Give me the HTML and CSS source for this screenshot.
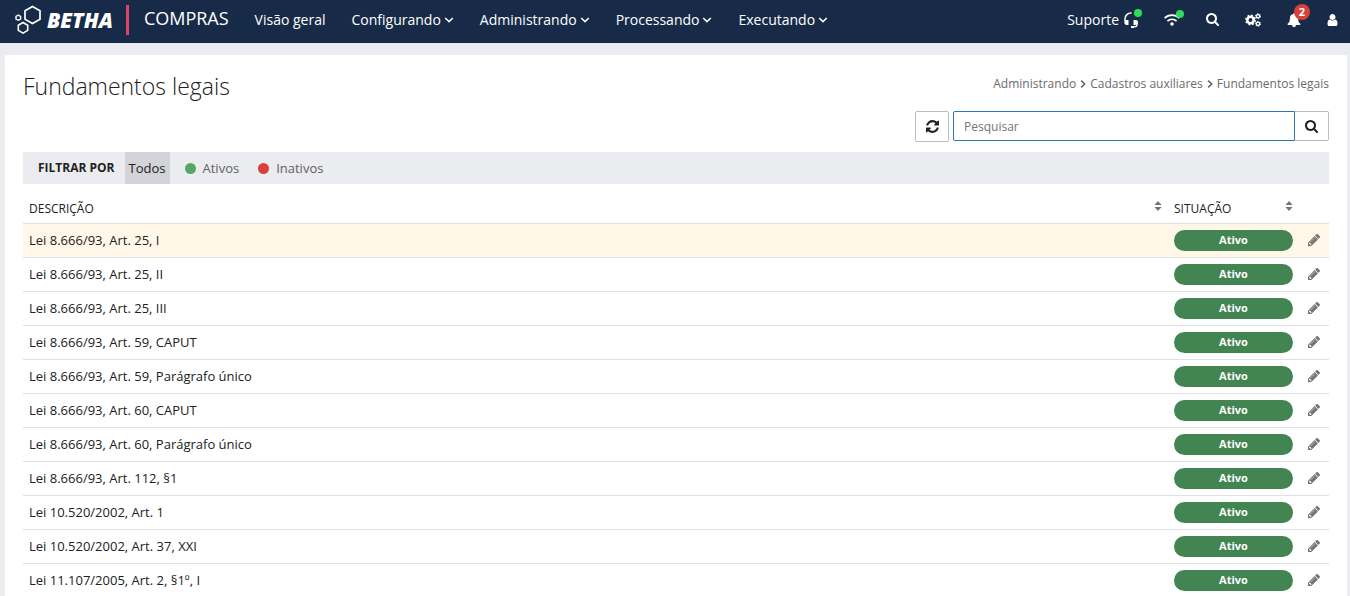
FILE: index.html
```
<!DOCTYPE html>
<html lang="pt-BR">
<head>
<meta charset="utf-8">
<meta name="viewport" content="width=device-width, initial-scale=1">
<title>Fundamentos legais</title>
<link rel="stylesheet" href="styles.css">
</head>
<body>
<svg class="sprite" aria-hidden="true">
  <symbol id="search" viewBox="0 0 1664 1664"><path d="M1152 704q0-185-131.500-316.500T704 256 387.500 387.500 256 704t131.500 316.500T704 1152t316.500-131.500T1152 704zm512 832q0 52-38 90t-90 38q-54 0-90-38l-343-342q-179 124-399 124-143 0-273.500-55.500t-225-150-150-225T0 704t55.500-273.500 150-225 225-150T704 0t273.500 55.500 225 150 150 225T1408 704q0 220-124 399l343 343q37 37 37 90z"/></symbol>
  <symbol id="refresh" viewBox="0 0 1536 1536"><path d="M1511 928q0 5-1 7-64 268-268 434.500T764 1536q-146 0-282.500-55T238 1324l-129 129q-19 19-45 19t-45-19-19-45V960q0-26 19-45t45-19h448q26 0 45 19t19 45-19 45l-137 137q71 66 161 102t187 36q134 0 250-65t186-179q11-17 53-117 8-23 30-23h192q13 0 22.500 9.500t9.500 22.500zm25-800v448q0 26-19 45t-45 19h-448q-26 0-45-19t-19-45 19-45l138-138Q969 256 768 256q-134 0-250 65T332 500q-11 17-53 117-8 23-30 23H50q-13 0-22.500-9.500T18 608v-7q65-268 270-434.500T768 0q146 0 284 55.500T1297 212l130-129q19-19 45-19t45 19 19 45z"/></symbol>
  <symbol id="pencil" viewBox="0 149 1515 1515"><path d="M363 1536l91-91-235-235-91 91v107h128v128h107zm523-928q0-22-22-22-10 0-17 7l-542 542q-7 7-7 17 0 22 22 22 10 0 17-7l542-542q7-7 7-17zm-54-192l416 416-832 832H0v-416zm683 96q0 53-37 90l-166 166-416-416 166-165q36-38 90-38 53 0 91 38l235 234q37 39 37 91z"/></symbol>
  <symbol id="bell" viewBox="0 0 1664 1792"><path d="M1664 1408q0 52-38 90t-90 38h-448q0 106-75 181t-181 75-181-75-75-181H128q-52 0-90-38t-38-90q50-42 91-88t85-119.500 74.500-158.500 50-206T320 576q0-152 117-282.500T744 135q-8-19-8-39 0-40 28-68t68-28 68 28 28 68q0 20-8 39 190 28 307 158.500T1344 576q0 139 19.500 260t50 206 74.500 158.500 85 119.500 91 88z"/></symbol>
  <symbol id="user" viewBox="0 0 1280 1536"><path d="M1280 1271q0 109-62.500 187t-150.500 78H213q-88 0-150.500-78T0 1271q0-85 8.500-160.500t31.500-152 58.500-131 94-89T327 704q131 128 313 128t313-128q76 0 134.500 34.500t94 89 58.500 131 31.500 152 8.500 160.500zm-256-887q0 159-112.500 271.500T640 768 368.500 655.500 256 384t112.500-271.500T640 0t271.500 112.500T1024 384z"/></symbol>
  <symbol id="cogs" viewBox="0 0 16 14">
    <g fill="none" stroke="currentColor">
      <circle cx="5.500" cy="7" r="3.200" stroke-width="2.600"/>
      <circle cx="5.500" cy="7" r="4.700" stroke-width="1.500" stroke-dasharray="1.850 1.841"/>
      <circle cx="13" cy="3.200" r="1.700" stroke-width="1.400"/>
      <circle cx="13" cy="3.200" r="2.500" stroke-width="1" stroke-dasharray="1.300 1.318"/>
      <circle cx="13" cy="10.800" r="1.700" stroke-width="1.400"/>
      <circle cx="13" cy="10.800" r="2.500" stroke-width="1" stroke-dasharray="1.300 1.318"/>
    </g>
  </symbol>
  <symbol id="wifi" viewBox="0 0 16 13">
    <path fill="none" stroke="currentColor" stroke-width="1.700" d="M.6 5.200a10.600 10.600 0 0 1 14.800 0M3.400 8.100a6.700 6.700 0 0 1 9.200 0"/>
    <circle cx="8" cy="11" r="1.800"/>
  </symbol>
  <symbol id="headset" viewBox="0 0 14 16">
    <path fill="none" stroke="currentColor" stroke-width="1.500" d="M1 9V7.200A6 6 0 0 1 7.500 1M13 9v3.500q0 2.300-2.500 2.300H8"/>
    <path d="M2 8h2.500v5H3Q.3 12.700.3 10.300T2 8zM12 8H9.500v5H11q2.700-.3 2.700-2.700T12 8zM7 14h3v2H7z"/>
  </symbol>
  <symbol id="down" viewBox="0 0 10 6"><path d="M1.200 1L5 4.600 8.800 1" fill="none" stroke="currentColor" stroke-width="1.500"/></symbol>
  <symbol id="right" viewBox="0 0 6 8"><path d="M1.200.7L4.600 4 1.200 7.300" fill="none" stroke="currentColor" stroke-width="1.700"/></symbol>
  <symbol id="sort" viewBox="0 0 8 10"><path d="M4 0l3.600 4H.4zM4 10L.4 6h7.200z"/></symbol>
</svg>

<header class="topbar">
  <a class="brand" href="#">
    <svg class="brand-mark" viewBox="0 0 28 30" aria-hidden="true">
      <path stroke-width="1.700" d="M18.500 1.500l7.500 4.200v8.600l-7.500 4.200-7.500-4.200V5.700z"/>
      <path stroke-width="1.600" d="M9 17.500l4.700 2.700v5.200L9 28.100l-4.700-2.700v-5.200z"/>
      <path stroke-width="1.400" d="M4.300 10.100l2.300 1.300V14l-2.300 1.300L2 14v-2.600z"/>
    </svg>
    <span class="brand-name">BETHA</span>
  </a>
  <span class="system">COMPRAS</span>
  <nav class="menu" aria-label="Principal">
    <a href="#">Visão geral</a>
    <a href="#">Configurando<svg class="caret"><use href="#down"/></svg></a>
    <a href="#">Administrando<svg class="caret"><use href="#down"/></svg></a>
    <a href="#">Processando<svg class="caret"><use href="#down"/></svg></a>
    <a href="#">Executando<svg class="caret"><use href="#down"/></svg></a>
  </nav>
  <div class="tools">
    <a class="tool support" href="#">Suporte<span class="mark"><svg class="i-headset"><use href="#headset"/></svg><i class="online"></i></span></a>
    <button class="tool" aria-label="Conexão"><span class="mark"><svg class="i-wifi"><use href="#wifi"/></svg><i class="online"></i></span></button>
    <button class="tool" aria-label="Buscar"><svg class="i-search"><use href="#search"/></svg></button>
    <button class="tool" aria-label="Configurações"><svg class="i-cogs"><use href="#cogs"/></svg></button>
    <button class="tool" aria-label="Notificações"><span class="mark"><svg class="i-bell"><use href="#bell"/></svg><span class="count">2</span></span></button>
    <button class="tool" aria-label="Usuário"><svg class="i-user"><use href="#user"/></svg></button>
  </div>
</header>

<main class="panel">
  <div class="heading">
    <h1>Fundamentos legais</h1>
    <nav class="crumbs" aria-label="Trilha">
      <a href="#">Administrando</a><svg><use href="#right"/></svg><a href="#">Cadastros auxiliares</a><svg><use href="#right"/></svg><a href="#">Fundamentos legais</a>
    </nav>
  </div>

  <form class="actions">
    <button class="btn reload" type="button" aria-label="Atualizar"><svg class="i-search"><use href="#refresh"/></svg></button>
    <div class="search">
      <input type="text" placeholder="Pesquisar" aria-label="Pesquisar">
      <button class="btn go" type="button" aria-label="Pesquisar"><svg class="i-search"><use href="#search"/></svg></button>
    </div>
  </form>

  <div class="filters">
    <strong>FILTRAR POR</strong>
    <button class="filter selected">Todos</button>
    <button class="filter"><i class="dot green"></i>Ativos</button>
    <button class="filter"><i class="dot red"></i>Inativos</button>
  </div>

  <table class="grid">
    <thead>
      <tr>
        <th><div class="head">DESCRIÇÃO<svg><use href="#sort"/></svg></div></th>
        <th class="status"><div class="head">SITUAÇÃO<svg><use href="#sort"/></svg></div></th>
        <th class="edit"></th>
      </tr>
    </thead>
    <tbody>
      <tr class="active"><td>Lei 8.666/93, Art. 25, I</td><td><span class="pill">Ativo</span></td><td><button class="pen" aria-label="Editar"><svg><use href="#pencil"/></svg></button></td></tr>
      <tr><td>Lei 8.666/93, Art. 25, II</td><td><span class="pill">Ativo</span></td><td><button class="pen" aria-label="Editar"><svg><use href="#pencil"/></svg></button></td></tr>
      <tr><td>Lei 8.666/93, Art. 25, III</td><td><span class="pill">Ativo</span></td><td><button class="pen" aria-label="Editar"><svg><use href="#pencil"/></svg></button></td></tr>
      <tr><td>Lei 8.666/93, Art. 59, CAPUT</td><td><span class="pill">Ativo</span></td><td><button class="pen" aria-label="Editar"><svg><use href="#pencil"/></svg></button></td></tr>
      <tr><td>Lei 8.666/93, Art. 59, Parágrafo único</td><td><span class="pill">Ativo</span></td><td><button class="pen" aria-label="Editar"><svg><use href="#pencil"/></svg></button></td></tr>
      <tr><td>Lei 8.666/93, Art. 60, CAPUT</td><td><span class="pill">Ativo</span></td><td><button class="pen" aria-label="Editar"><svg><use href="#pencil"/></svg></button></td></tr>
      <tr><td>Lei 8.666/93, Art. 60, Parágrafo único</td><td><span class="pill">Ativo</span></td><td><button class="pen" aria-label="Editar"><svg><use href="#pencil"/></svg></button></td></tr>
      <tr><td>Lei 8.666/93, Art. 112, §1</td><td><span class="pill">Ativo</span></td><td><button class="pen" aria-label="Editar"><svg><use href="#pencil"/></svg></button></td></tr>
      <tr><td>Lei 10.520/2002, Art. 1</td><td><span class="pill">Ativo</span></td><td><button class="pen" aria-label="Editar"><svg><use href="#pencil"/></svg></button></td></tr>
      <tr><td>Lei 10.520/2002, Art. 37, XXI</td><td><span class="pill">Ativo</span></td><td><button class="pen" aria-label="Editar"><svg><use href="#pencil"/></svg></button></td></tr>
      <tr><td>Lei 11.107/2005, Art. 2, §1º, I</td><td><span class="pill">Ativo</span></td><td><button class="pen" aria-label="Editar"><svg><use href="#pencil"/></svg></button></td></tr>
    </tbody>
  </table>
</main>
</body>
</html>
```
FILE: styles.css
```
* { box-sizing: border-box; }
body {
  margin: 0;
  background: #ebecf0;
  color: #212121;
  font: 13px/20px "Open Sans", "Noto Sans", sans-serif;
}
a { color: inherit; text-decoration: none; }
button, input { font: inherit; color: inherit; }
button { padding: 0; border: 0; background: none; cursor: pointer; }
svg { display: block; flex: none; fill: currentColor; }
.sprite { position: absolute; width: 0; height: 0; }

/* Top bar */
.topbar {
  display: flex;
  align-items: center;
  height: 43px;
  padding: 0 12px 4px 14px;
  background: #172b48;
  color: #fff;
  font-size: 14px;
}
.brand {
  display: flex;
  align-items: center;
  gap: 5px;
  padding-right: 13px;
  border-right: 3px solid #e04462;
  height: 30px;
}
.brand-mark { width: 28px; height: 30px; fill: none; stroke: currentColor; }
.brand-name { font-size: 21px; font-weight: 800; font-style: italic; }
.system { margin-left: 15px; font-size: 18px; line-height: 24px; padding-bottom: 3px; }
.menu { display: flex; gap: 26px; margin-left: 26px; }
.menu a { display: flex; align-items: center; }
.caret { width: 10px; height: 6px; margin-left: 3px; }
.tools { display: flex; align-items: center; margin-left: auto; }
.tool { display: flex; align-items: center; justify-content: center; height: 30px; margin-left: 26px; }
.support { gap: 5px; }
.mark { position: relative; display: block; }
.online {
  position: absolute;
  top: -3px;
  right: -4px;
  width: 8px;
  height: 8px;
  border-radius: 50%;
  background: #2fdc5a;
}
.i-headset { width: 14px; height: 16px; }
.i-wifi { width: 16px; height: 13px; }
.i-search { width: 13px; height: 13px; }
.i-cogs { width: 16px; height: 14px; }
.i-bell { width: 14px; height: 14px; }
.i-user { width: 11px; height: 12px; }
.count {
  position: absolute;
  top: -9px;
  right: -9px;
  width: 16px;
  height: 16px;
  border-radius: 50%;
  background: #d9403a;
  font-size: 11px;
  font-weight: 700;
  line-height: 16px;
  text-align: center;
}

/* Page panel */
.panel {
  margin: 12px 3px 0 5px;
  padding: 16px 18px 0;
  border-radius: 2px;
  background: #fff;
}
.heading { display: flex; justify-content: space-between; height: 40px; }
h1 { margin: 0; font-size: 23px; font-weight: 300; line-height: 30px; }
.crumbs { display: flex; align-items: center; height: 26px; color: #6b6b6b; font-size: 12px; }
.crumbs svg { width: 6px; height: 8px; margin: 0 4px; }

.actions { display: flex; justify-content: flex-end; gap: 4px; height: 31px; }
.btn {
  display: flex;
  align-items: center;
  justify-content: center;
  width: 34px;
  border: 1px solid #bdbdbd;
  border-radius: 2px;
  background: #fff;
}
.search { display: flex; width: 376px; height: 30px; }
.search input {
  flex: 1;
  min-width: 0;
  padding: 2px 10px 0;
  border: 1px solid #2f73b8;
  border-radius: 2px 0 0 2px;
  font-size: 12px;
  outline: 0;
}
.search input::placeholder { color: #757575; }
.go { border-left: 0; border-radius: 0 2px 2px 0; }

.filters { display: flex; height: 32px; margin-top: 10px; padding-left: 15px; background: #ebecf0; color: #616161; }
.filters strong { margin-right: 10px; color: #212121; font-size: 12px; font-weight: 700; line-height: 31px; }
.filter { display: flex; align-items: center; gap: 7px; margin-right: 11px; padding: 0 4px; }
.selected { background: #d3d4d8; color: #212121; }
.dot { width: 11px; height: 11px; border-radius: 50%; }
.green { background: #56a668; }
.red { background: #d9403a; }

/* Records */
.grid { width: 100%; border-collapse: collapse; table-layout: fixed; }
.grid th { height: 39px; padding: 11px 6px 0; font-size: 12px; font-weight: 400; text-align: left; }
.grid .status { width: 131px; }
.grid .edit { width: 30px; }
.head { display: flex; justify-content: space-between; }
.head svg { width: 8px; height: 10px; margin-top: 2px; color: #757575; }
.grid td { height: 34px; padding: 0 6px; border-top: 1px solid #e0e1e5; }
.grid .active { background: #fff8e8; }
.pill {
  display: block;
  height: 21px;
  border-radius: 11px;
  background: #438552;
  color: #fff;
  font-size: 11px;
  font-weight: 700;
  line-height: 20px;
  text-align: center;
}
.pen { display: block; margin: 0 auto; color: #757575; }
.pen svg { width: 12px; height: 12px; }
```
